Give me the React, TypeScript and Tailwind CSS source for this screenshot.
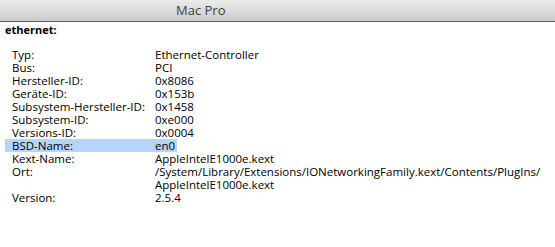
export default function App() {
  const rows: [string, string][] = [
    ["Typ:", "Ethernet-Controller"],
    ["Bus:", "PCI"],
    ["Hersteller-ID:", "0x8086"],
    ["Geräte-ID:", "0x153b"],
    ["Subsystem-Hersteller-ID:", "0x1458"],
    ["Subsystem-ID:", "0xe000"],
    ["Versions-ID:", "0x0004"],
  ]

  return (
    <div className="w-[555px] h-[247px] bg-white overflow-hidden font-['Open_Sans',sans-serif] text-black">
      {/* title bar */}
      <div className="h-[22px] bg-gradient-to-b from-[#ececec] to-[#cbcbcb] border-b border-[#5c5c5c] flex items-center">
        <span className="ml-[176px] text-[13px] text-[#3e3e3e] leading-none">Mac Pro</span>
      </div>

      <div className="pl-[5px] pt-[1px] text-[11px] font-bold leading-[13px]">ethernet:</div>

      <div className="mt-[12px] text-[11.5px] leading-[13px]">
        {rows.map(([label, value]) => (
          <div key={label} className="flex">
            <span className="w-[155px] pl-[12px] shrink-0">{label}</span>
            <span>{value}</span>
          </div>
        ))}
        <div className="flex">
          <div className="flex ml-[5px] pl-[7px] pr-[2px] bg-[#b5d5ff]">
            <span className="w-[143px] shrink-0">BSD-Name:</span>
            <span>en0</span>
          </div>
        </div>
        <div className="flex">
          <span className="w-[155px] pl-[12px] shrink-0">Kext-Name:</span>
          <span>AppleIntelE1000e.kext</span>
        </div>
        <div className="flex">
          <span className="w-[155px] pl-[12px] shrink-0">Ort:</span>
          <span className="w-[398px]">
            /System/Library/Extensions/IONetworkingFamily.kext/Contents/PlugIns/
            <br />
            AppleIntelE1000e.kext
          </span>
        </div>
        <div className="flex">
          <span className="w-[155px] pl-[12px] shrink-0">Version:</span>
          <span>2.5.4</span>
        </div>
      </div>
    </div>
  )
}
